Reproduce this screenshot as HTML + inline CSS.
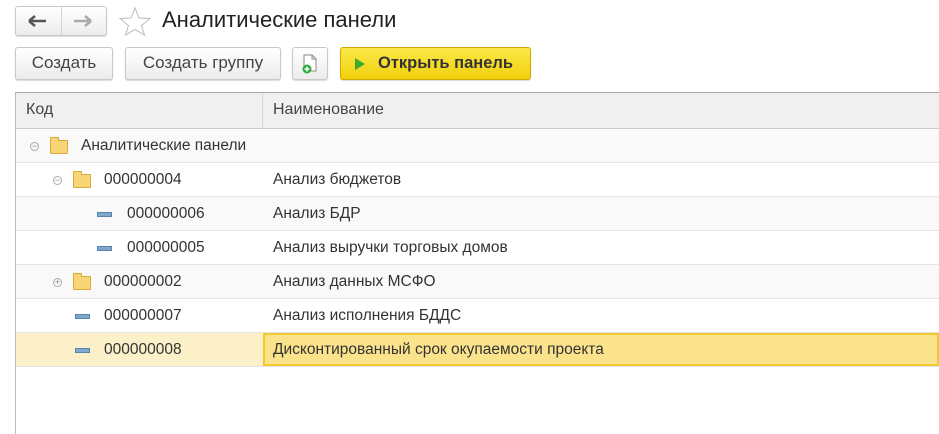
<!DOCTYPE html>
<html><head><meta charset="utf-8"><style>
*{box-sizing:border-box;margin:0;padding:0}
body{width:939px;height:434px;overflow:hidden;background:#fff;font-family:"Liberation Sans",Arial,sans-serif;color:#333;position:relative}
.abs{position:absolute}
.btn{position:absolute;border:1px solid #c8c8c8;border-radius:3px;background:linear-gradient(#fff,#ececec);box-shadow:0 1px 1px rgba(0,0,0,.15);font-size:17px;color:#444;text-align:center;line-height:30px}
.row{position:absolute;left:16px;right:0;height:34px;border-bottom:1px solid #e4e4e4;font-size:15.5px;color:#333}
.row span{position:absolute;top:8px}
.fold{position:absolute;top:11px;width:18px;height:14px;background:#f8d677;border:1px solid #d9a93a;border-radius:1px}
.fold:before{content:"";position:absolute;left:-1px;top:-4px;width:7px;height:3px;background:#f8d677;border:1px solid #d9a93a;border-bottom:none;border-radius:1px 1px 0 0}
.item{position:absolute;top:15px;width:15px;height:5px;background:#7fa8cf;border:1px solid #5a83ad}
.tog{position:absolute;top:13px;width:9px;height:9px;border:1px solid #aaa;border-radius:50%;font-size:9px;line-height:7px;text-align:center;color:#888}
</style></head><body>
<div class="btn" style="left:15px;top:6px;width:92px;height:30px"></div>
<div class="abs" style="left:61px;top:7px;width:1px;height:28px;background:#d4d4d4"></div>
<svg class="abs" style="left:28px;top:14px" width="20" height="14"><path d="M1 7H18M1 7L7 2M1 7L7 12" stroke="#555" stroke-width="2.5" fill="none"/></svg>
<svg class="abs" style="left:73px;top:14px" width="20" height="14"><path d="M1 7H18M18 7L12 2M18 7L12 12" stroke="#aaa" stroke-width="2.5" fill="none"/></svg>
<svg class="abs" style="left:118px;top:6px" width="34" height="30"><path d="M17 2L21 12L32 12.5L23.5 19.5L26.5 29L17 23.5L7.5 29L10.5 19.5L2 12.5L13 12Z" fill="none" stroke="#bbb" stroke-width="1"/></svg>
<div class="abs" style="left:162px;top:7px;font-size:22px;color:#222">Аналитические панели</div>
<div class="btn" style="left:15px;top:47px;width:98px;height:33px">Создать</div>
<div class="btn" style="left:125px;top:47px;width:156px;height:33px">Создать группу</div>
<div class="btn" style="left:292px;top:47px;width:36px;height:33px"></div>
<svg class="abs" style="left:300px;top:53px" width="20" height="22"><path d="M4 2H12L16 6V18H4Z" fill="#fff" stroke="#888"/><path d="M12 2V6H16" fill="none" stroke="#888"/><circle cx="7" cy="16" r="4.5" fill="#2eaa3f"/><path d="M7 13.5V18.5M4.5 16H9.5" stroke="#fff" stroke-width="1.5"/></svg>
<div class="abs" style="left:340px;top:47px;width:191px;height:33px;border:1px solid #d0a800;border-radius:3px;background:linear-gradient(#fbe94a,#f2cf0a);box-shadow:0 1px 1px rgba(0,0,0,.15)"></div>
<svg class="abs" style="left:354px;top:57px" width="12" height="14"><path d="M1 1L11 7L1 13Z" fill="#3bab2c"/></svg>
<div class="abs" style="left:378px;top:54px;font-size:16.5px;font-weight:bold;color:#333">Открыть панель</div>

<div class="abs" style="left:15px;top:92px;width:1px;height:342px;background:#bbb"></div>
<div class="abs" style="left:15px;top:92px;right:0;height:1px;background:#aaa"></div>
<div class="abs" style="left:16px;top:93px;right:0;height:36px;background:#f0f0f0;border-bottom:1px solid #ccc;font-size:16px;color:#444">
<span class="abs" style="left:10px;top:8px">Код</span>
<span class="abs" style="left:246px;top:0;width:1px;height:35px;background:#d6d6d6"></span>
<span class="abs" style="left:257px;top:8px">Наименование</span></div>

<div class="row" style="top:129px;background:#f9f9f9"><div class="tog" style="left:14px">−</div><div class="fold" style="left:34px"></div><span style="left:65px">Аналитические панели</span></div>
<div class="row" style="top:163px"><div class="tog" style="left:37px">−</div><div class="fold" style="left:57px"></div><span style="left:88px">000000004</span><span style="left:257px">Анализ бюджетов</span></div>
<div class="row" style="top:197px;background:#f9f9f9"><div class="item" style="left:81px"></div><span style="left:111px">000000006</span><span style="left:257px">Анализ БДР</span></div>
<div class="row" style="top:231px"><div class="item" style="left:81px"></div><span style="left:111px">000000005</span><span style="left:257px">Анализ выручки торговых домов</span></div>
<div class="row" style="top:265px;background:#f9f9f9"><div class="tog" style="left:37px">+</div><div class="fold" style="left:57px"></div><span style="left:88px">000000002</span><span style="left:257px">Анализ данных МСФО</span></div>
<div class="row" style="top:299px"><div class="item" style="left:59px"></div><span style="left:88px">000000007</span><span style="left:257px">Анализ исполнения БДДС</span></div>
<div class="row" style="top:333px;background:#fbf0c8"><div class="item" style="left:59px"></div><span style="left:88px">000000008</span>
<div class="abs" style="left:247px;top:0;right:0;height:33px;background:#fbe38c;border:2px solid #f2c830"></div><span style="left:257px">Дисконтированный срок окупаемости проекта</span></div>
</body></html>
